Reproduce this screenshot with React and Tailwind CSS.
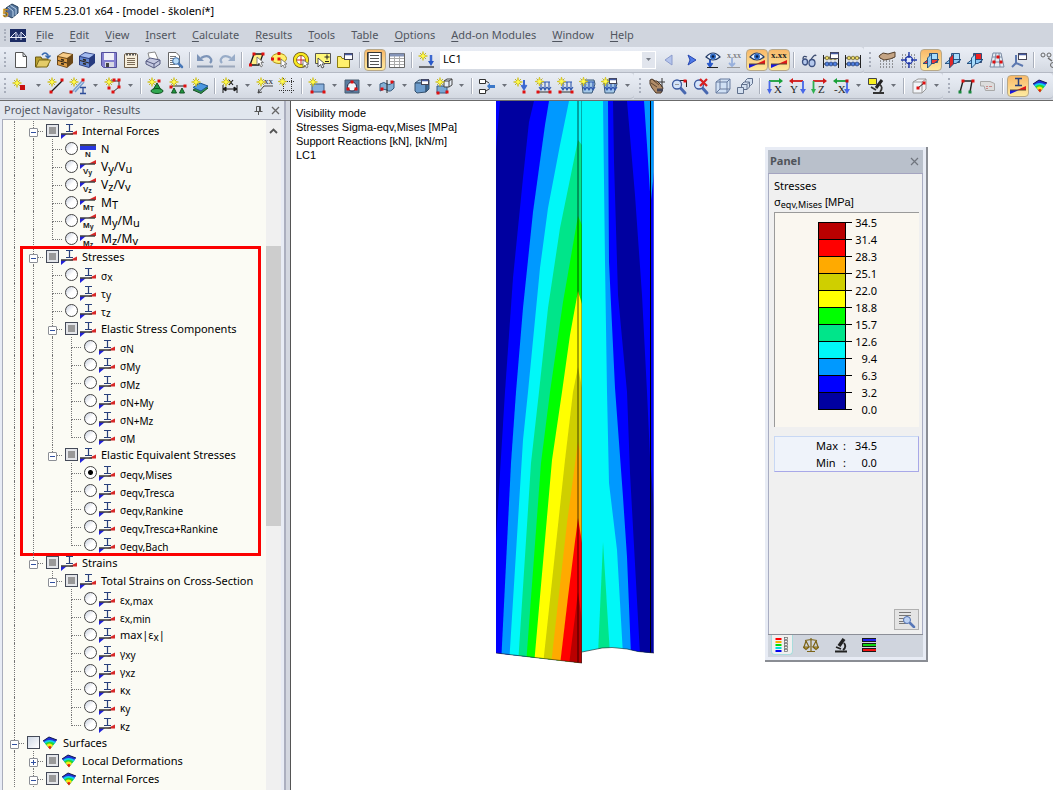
import { useState } from "react";
import clsx from "clsx";

/* ---------- shared icon parts ---------- */

const Spark = ({ x = 4, y = 4 }) => (
  <g transform={`translate(${x} ${y})`}>
    <path d="M0-4.500L1-1L4.500 0L1 1L0 4.500L-1 1L-4.500 0L-1-1Z" fill="#f4e818" stroke="#c8b818" strokeWidth="0.600" />
    <path d="M-3-3L3 3M-3 3L3-3" stroke="#b4a820" strokeWidth="0.900" />
    <circle r="1.800" fill="#fffa50" />
  </g>
);

const Dot = ({ x, y, c = "#e01010" }) => (
  <rect x={x - 1.5} y={y - 1.5} width="3" height="3" fill={c} />
);

const Lens = ({ x = 7, y = 6 }) => (
  <g transform={`translate(${x} ${y})`}>
    <path d="M3 3L8 8.500" stroke="#4868b0" strokeWidth="3" strokeLinecap="round" />
    <circle r="4.500" fill="#d4e4fa" stroke="#3c5aa0" strokeWidth="1.300" />
  </g>
);

const Cube = () => (
  <>
    <path d="M1 5L5 2H15L12 5Z" fill="#a8ccec" stroke="#34506c" />
    <path d="M1 5H12V14L3 15L1 13Z" fill="#6c9ccc" stroke="#34506c" />
    <path d="M12 5L15 2V11L12 14Z" fill="#3c6c9c" stroke="#34506c" />
  </>
);

const Cabinet = ({ light, mid, dark }) => (
  <>
    <path d="M0 4L6 0L16 2V11L10 16L0 13Z" fill={dark} />
    <path d="M1 4L6 1L15 2.500L10 6Z" fill={light} />
    <path d="M1 5L10 7V15L1 12.500Z" fill={mid} />
    <path d="M1 8.500L10 11" stroke="#2c2418" />
    <path d="M4 7.500L7 8.300M4 11.500L7 12.300" stroke="#2c2418" strokeWidth="1.600" />
  </>
);

const Loads = ({ box }) => (
  <>
    {box && <path d="M2 6L5 2H14L15 6L12 15H3Z" fill="#a4c8e8" stroke="#3a5878" />}
    <path d="M3 4H14M5 4V11M9 4V11M13 4V11M3 9L5 12L7 9M7 9L9 12L11 9M11 9L13 12L15 9" stroke="#3058b0" strokeWidth="1.100" fill="none" />
    <Spark x={3.500} y={3.500} />
    {!box && <path d="M1 14H15" stroke="#333" />}
    {!box && <Dot x={2} y={14} />}
    {!box && <Dot x={14} y={14} />}
  </>
);

const Eye = () => (
  <>
    <path d="M1 5Q8-3 15 5Q8 11 1 5Z" fill="#eef5ff" stroke="#223a66" strokeWidth="1.200" />
    <circle cx="8" cy="4.500" r="3" fill="#2f6cc8" />
    <circle cx="8" cy="4.500" r="1.300" fill="#0a1c40" />
  </>
);

const Ramp = () => (
  <>
    <path d="M0 12V16L9 12Z" fill="#1818e0" />
    <path d="M7 12H16V8Z" fill="#e01818" />
    <path d="M0 12H16" stroke="#5a4a30" />
  </>
);

const Abacus = () => (
  <>
    <path d="M0.500 3V16M15.500 3V16M1 6H15M1 12H15" stroke="#222" fill="none" />
    <g fill="#e8d868" stroke="#554a10" strokeWidth="0.600">
      <circle cx="4" cy="6" r="1.800" /><circle cx="8" cy="6" r="1.800" /><circle cx="12" cy="6" r="1.800" />
    </g>
    <g fill="#5080e0" stroke="#102860" strokeWidth="0.600">
      <circle cx="4" cy="12" r="2" /><circle cx="8" cy="12" r="2" /><circle cx="12" cy="12" r="2" />
    </g>
  </>
);

const Planes = ({ fills }) => (
  <g stroke="#1c4878" strokeWidth="0.900">
    <path d="M6.500 1.500H14.500V10.500H6.500Z" fill={fills[2]} />
    <path d="M0 11.500L5 7.500H16L11 11.500Z" fill={fills[0]} />
    <path d="M4.500 6L8.500 2V12L4.500 16Z" fill={fills[1]} />
  </g>
);

const Axes = ({ h, v, label, flip }) => (
  <>
    <path d={flip ? "M14 3H3" : "M2 3H13"} stroke={h} strokeWidth="1.800" />
    <path d={flip ? "M4 0L0 3L4 6Z" : "M12 0L16 3L12 6Z"} fill={h} />
    <path d={flip ? "M14 3V12" : "M2.500 3V12"} stroke={v} strokeWidth="1.800" />
    <path d={flip ? "M11 11L14 16L17 11Z" : "M0 11L2.500 16L5 11Z"} fill={v} />
    <text x={flip ? 1 : 7} y="15" fontSize="11" fontFamily="Liberation Serif, serif" fill="#222">{label}</text>
  </>
);

const Rainbow = () => (
  <>
    <path d="M1 6L7 2L15 5L8 14Z" fill="#2030d8" />
    <path d="M2 7Q7 3 14 7L8 14Z" fill="#10d0e8" />
    <path d="M3 8.500Q8 5 12.500 8.500L8 14Z" fill="#28d830" />
    <path d="M4.500 10Q8 7 11 10.500L8 14Z" fill="#f8e818" />
    <path d="M6 12Q8 10 9.500 12L8 14.500Z" fill="#e82010" />
    <path d="M1 6L7 2L15 5" fill="none" stroke="#101850" />
  </>
);

const Grid = () => (
  <path d="M1 3H16M1 6H16M1 9H16M1 12H16M1 15H16" stroke="#444" strokeDasharray="1 2" />
);

const MiniWindow = ({ x, y, w = 8, h = 6 }) => (
  <g transform={`translate(${x} ${y})`}>
    <rect x="0.500" y="0.500" width={w - 1} height={h - 1} fill="#fff" stroke="#445" />
    <path d={`M1 1.500H${w - 1}`} stroke="#445aa0" strokeWidth="1.500" />
  </g>
);

/* ---------- toolbar icons ---------- */

const icons = {
  doc: <path d="M2.500 0.500H10L13.500 4.500V15.500H2.500ZM10 0.500V4.500H14" fill="#fff" stroke="#555" />,
  open: (
    <>
      <path d="M0.500 15V5H6L7 7H13V14Z" fill="#b8a030" stroke="#6c5a10" />
      <path d="M1 15L4 8H15.500L12 15Z" fill="#e4cc68" stroke="#7c6a18" />
      <path d="M7 3Q10-1 13 3V5M10.500 3.500L13 6L15.500 3.500" fill="none" stroke="#3468b0" strokeWidth="1.500" />
    </>
  ),
  cabinetBrown: <Cabinet light="#f8cc88" mid="#e0a048" dark="#6c4818" />,
  cabinetBlue: <Cabinet light="#a4bcf0" mid="#6488d0" dark="#283c80" />,
  save: (
    <>
      <path d="M0.500 0.500H15.500V15.500H2.500L0.500 13.500Z" fill="#8480d0" stroke="#54509c" />
      <path d="M3 1H13V8H3Z" fill="#f0f0f8" />
      <path d="M4 10H13V15H4Z" fill="#d8d8e4" />
      <path d="M5 11H8V15H5Z" fill="#444" />
    </>
  ),
  clipboard: (
    <>
      <path d="M1.500 2.500L3 1.500H13L14.500 2.500V15.500H1.500Z" fill="#f6eedc" stroke="#6c5c48" />
      <path d="M3 2.500H13" stroke="#555" strokeWidth="2" strokeDasharray="2 1" />
      <path d="M4 6.500H12M4 8.500H12M4 10.500H12M4 12.500H12" stroke="#7c6c58" />
    </>
  ),
  printer: (
    <>
      <path d="M3 1L10 0L13 7L5 9Z" fill="#fff" stroke="#888" />
      <path d="M1 9L5 6L15 8V12L9 16L1 12Z" fill="#c4c8e0" stroke="#555a80" />
      <path d="M1 9L9 12L15 8M9 12V16" fill="none" stroke="#555a80" />
    </>
  ),
  preview: (
    <>
      <path d="M1.500 0.500H9L12.500 4V15.500H1.500Z" fill="#fff" stroke="#666" />
      <path d="M3 4.500H9M3 6.500H8M3 8.500H7M3 10.500H8M3 12.500H8" stroke="#777" />
      <g transform="translate(9 9)">
        <path d="M2 2L6 6" stroke="#4878b8" strokeWidth="2.500" strokeLinecap="round" />
        <circle r="3.300" fill="#b8dcf8" stroke="#3c6ca8" />
      </g>
    </>
  ),
  undo: (
    <>
      <path d="M4 6Q11 2 14 7Q15 9 13 11" fill="none" stroke="#7c94b8" strokeWidth="2.200" />
      <path d="M0 2V9H7Z" fill="#7c94b8" />
      <path d="M0 14.500H16" stroke="#8898b0" strokeWidth="2" />
    </>
  ),
  redo: (
    <>
      <path d="M12 6Q5 2 2 7Q1 9 3 11" fill="none" stroke="#98acc8" strokeWidth="2.200" />
      <path d="M16 2V9H9Z" fill="#98acc8" />
      <path d="M0 14.500H16" stroke="#9ca8bc" strokeWidth="2" />
    </>
  ),
  selectPoly: (
    <>
      <path d="M5 2H14L10 13H1Z" fill="#fff088" stroke="#181818" strokeWidth="1.300" />
      <path d="M8 5V13L10 11L12 15L13.500 14L12 10.500H14.500Z" fill="#fff" stroke="#666" strokeWidth="0.800" />
      <Dot x={5} y={2} /><Dot x={14} y={2} /><Dot x={1.500} y={13} />
    </>
  ),
  selectEllipse: (
    <>
      <ellipse cx="8" cy="6.500" rx="7.500" ry="5" fill="#fff06c" stroke="#b09010" />
      <path d="M10 7V15L12 13L13.500 16L15 15L13.500 12H16Z" fill="#fff" stroke="#666" strokeWidth="0.800" />
      <Dot x={1.500} y={7} /><Dot x={8} y={1.500} /><Dot x={8} y={7} />
    </>
  ),
  selectRing: (
    <>
      <circle cx="8" cy="8" r="6" fill="#fff" stroke="#604810" strokeWidth="4" />
      <circle cx="8" cy="8" r="6" fill="none" stroke="#f8e820" strokeWidth="2.600" />
      <path d="M8 4V12M4 8H12" stroke="#d02020" />
      <path d="M10 8V15L12 13L13.500 16L15 15L13.500 12H16Z" fill="#fff" stroke="#666" strokeWidth="0.800" />
    </>
  ),
  selectPlus: (
    <>
      <path d="M0.500 1.500H15.500V11.500H0.500Z" fill="#fff878" stroke="#555" />
      <path d="M12 2.500V7.500M9.500 5H14.500M10 9.500H14" stroke="#222" />
      <path d="M3 6V15L5.500 12.500L7 16L9 15L7 12H10Z" fill="#fff" stroke="#444" strokeWidth="0.900" />
    </>
  ),
  selectWindow: (
    <>
      <path d="M0.500 4.500H4L5 6.500H12.500V15.500H0.500Z" fill="#fff06c" stroke="#8c7c10" />
      <MiniWindow x={7} y={1} w={9} h={7} />
    </>
  ),
  listPane: (
    <>
      <path d="M0.500 0.500H14.500V15.500H0.500Z" fill="#fff" stroke="#333" />
      <path d="M3 3.500H12M3 6.500H12M3 9.500H12M3 12.500H12" stroke="#555" />
      <path d="M1.500 1V15M14 1V15" stroke="#777" />
    </>
  ),
  tablePane: (
    <>
      <path d="M0.500 1.500H15.500V15.500H0.500Z" fill="#fff" stroke="#666" />
      <path d="M1 3H15" stroke="#8494b8" strokeWidth="3" />
      <path d="M1 6.500H15M1 9.500H15M1 12.500H15M5.500 4V15M10.500 4V15" stroke="#aaa" />
    </>
  ),
  newLoad: (
    <>
      <Spark x={4} y={4} />
      <path d="M12 3V10" stroke="#3c68d0" strokeWidth="2.500" />
      <path d="M9 9L12 14L15 9Z" fill="#2858c8" />
      <path d="M0 15H15" stroke="#222" strokeWidth="1.200" />
    </>
  ),
  prev: <path d="M11 3V13L4 8Z" fill="#b4c4ec" stroke="#8c9ccc" />,
  next: <path d="M5 3L13 8L5 13L7 8Z" fill="#4c78e8" stroke="#2848b0" />,
  eyeLoad: (
    <>
      <path d="M5 8V13M2.500 11L5 14.500L7.500 11" stroke="#2858c8" strokeWidth="2" fill="none" />
      <Eye />
      <path d="M2 15.500H13" stroke="#222" />
    </>
  ),
  valuesOff: (
    <>
      <text x="0" y="6" fontSize="8" fontFamily="Liberation Serif, serif" fill="#555">x.xx</text>
      <path d="M5 6V13M2 11L5 14L8 11" stroke="#98b0dc" strokeWidth="1.800" fill="none" />
      <path d="M0 15.500H13" stroke="#999" />
    </>
  ),
  eyeRamp: <><Eye /><Ramp /></>,
  valuesRamp: (
    <>
      <text x="0" y="6" fontSize="9" fontWeight="bold" fontFamily="Liberation Serif, serif" fill="#222">x.xx</text>
      <Ramp />
    </>
  ),
  glasses: (
    <>
      <path d="M2 7Q2 3 6 5M9 9Q14 1 15 4" stroke="#3c4c70" strokeWidth="1.300" fill="none" />
      <ellipse cx="4" cy="10" rx="2.500" ry="3" fill="#b4c8ec" stroke="#3c5080" strokeWidth="1.300" />
      <ellipse cx="11" cy="11" rx="3" ry="3.500" fill="#b4c8ec" stroke="#3c5080" strokeWidth="1.300" />
    </>
  ),
  abacusWindow: <><Abacus /><MiniWindow x={7} y={0} w={9} h={7} /></>,
  abacus: <Abacus />,
  handGrid: (
    <>
      <Grid />
      <path d="M0 4L4 1L9 2L16 0V5L11 7L5 8L1 6Z" fill="#c4a484" stroke="#54402c" />
    </>
  ),
  snapGrid: (
    <>
      <Grid />
      <circle cx="8" cy="8" r="3.500" fill="#e4ecfc" stroke="#2038a8" strokeWidth="1.300" />
      <path d="M8 0V6M8 10V16M0 8H6M10 8H16" stroke="#2038a8" strokeWidth="1.400" />
    </>
  ),
  planeXY: <Planes fills={["#f03838", "#8cc8f4", "#a8dcfc"]} />,
  planeYZ: <Planes fills={["#8cc8f4", "#e02828", "#a8dcfc"]} />,
  planeXZ: <Planes fills={["#8cc8f4", "#a8dcfc", "#f02020"]} />,
  mesh: (
    <>
      <path d="M4 1H12L15 15H1ZM3 5H13M2 10H14M7 1L5 15M10 1L11 15" fill="#e4ecf4" stroke="#7c8ca4" />
      <Dot x={9} y={5} /><Dot x={5} y={10} /><Dot x={12} y={10} />
    </>
  ),
  axisWindow: (
    <>
      <path d="M5 3V11L1 15M5 11L12 14" stroke="#5c78b0" strokeWidth="2" fill="none" />
      <MiniWindow x={7} y={1} w={9} h={7} />
    </>
  ),
  linkNodes: (
    <>
      <circle cx="2" cy="3" r="2" fill="none" stroke="#666" />
      <circle cx="8" cy="3" r="2" fill="none" stroke="#666" />
      <path d="M7 6L11 9" stroke="#666" strokeWidth="1.500" />
      <circle cx="12" cy="13" r="2.500" fill="none" stroke="#666" />
    </>
  ),
  node: <><Spark x={4} y={5} /><rect x="7" y="7" width="5" height="5" fill="#c81010" /></>,
  line: (
    <>
      <path d="M3 14L14 3" stroke="#181818" strokeWidth="1.300" />
      <Spark x={4} y={4} /><Dot x={14} y={2} /><Dot x={3} y={14} />
    </>
  ),
  member: (
    <>
      <path d="M2 14L12 3M5 14L14 4" stroke="#78a0d0" strokeWidth="1.500" />
      <path d="M10 9.500H16M13 9.500V15M10 15.500H16" stroke="#2c4c98" strokeWidth="1.300" />
      <Spark x={4} y={4} /><Dot x={13} y={2} /><Dot x={1} y={14} />
    </>
  ),
  polyline: (
    <>
      <path d="M6 3H14V9L8 14" stroke="#333" fill="none" />
      <Spark x={4} y={4} /><Dot x={9} y={2} /><Dot x={14} y={2} /><Dot x={14} y={9} /><Dot x={8} y={14} /><Dot x={4} y={10} />
    </>
  ),
  support: (
    <>
      <path d="M9 5L13 12H5Z" fill="#209840" stroke="#105020" />
      <ellipse cx="9" cy="13" rx="6" ry="2.500" fill="#30a850" stroke="#105020" />
      <Dot x={11} y={3} /><Spark x={4} y={4} />
    </>
  ),
  supportPair: (
    <>
      <path d="M2 8H15" stroke="#222" />
      <path d="M4 10L6.500 15H1.500ZM12 10L14.500 15H9.500Z" fill="#209840" stroke="#105020" />
      <Spark x={4} y={4} /><Dot x={1} y={9} /><Dot x={15} y={8} />
    </>
  ),
  surface: (
    <>
      <path d="M1 12L8 8L16 10L9 15.500Z" fill="#2c9048" stroke="#185028" />
      <path d="M1 9.500L8 5L16 8L9 13Z" fill="#4c98e0" stroke="#205890" />
      <Spark x={4} y={4} />
    </>
  ),
  dimension: (
    <>
      <path d="M1 7V15M15 7V15M1 11H15M1 11L4 9V13ZM15 11L12 9V13Z" stroke="#181818" fill="#181818" />
      <path d="M7 2L11 7M11 2L7 7" stroke="#181818" strokeWidth="1.200" /><Spark x={4} y={4} />
    </>
  ),
  comment: (
    <>
      <path d="M1 15L7 8H16M1 15L2 11M1 15L5 14" stroke="#444" fill="none" />
      <text x="7" y="6" fontSize="9" fontFamily="Liberation Serif, serif" fill="#222">xx</text>
      <Spark x={4} y={4} />
    </>
  ),
  guideline: (
    <>
      <path d="M4.500 0V16M12.500 0V16M0 3.500H16M0 12.500H16" stroke="#333" strokeDasharray="1 1" />
      <Spark x={3.500} y={3.500} />
    </>
  ),
  rect: (
    <>
      <path d="M3 6H15V14H3Z" fill="#88b0dc" stroke="#385880" />
      <Spark x={4} y={4} /><Dot x={3} y={14} /><Dot x={15} y={14} />
    </>
  ),
  opening: (
    <>
      <path d="M1 2H15V15H1Z" fill="#587ca0" stroke="#485c70" />
      <circle cx="8" cy="8.500" r="4.500" fill="#f4f6fa" stroke="#224" />
      <Dot x={8} y={4} /><Dot x={4} y={11} /><Dot x={12} y={11} />
    </>
  ),
  shell: (
    <>
      <path d="M1 6Q5 3 8 6Q11 8 15 3V10Q11 15 8 12Q5 10 1 13Z" fill="#84b0d4" stroke="#34587c" />
      <path d="M8 2V15" stroke="#222" /><Dot x={3} y={11} /><Dot x={13} y={4} />
    </>
  ),
  solid: <><Cube /><MiniWindow x={7} y={1} w={8} h={6} /></>,
  solidNew: (
    <>
      <path d="M1 8H11V15H1Z" fill="#78a8d4" stroke="#385880" />
      <path d="M8 3L11 1H16V7L13 9H8ZM8 3H13V9M13 3L16 1" fill="#e8eef6" stroke="#444" />
      <Spark x={4} y={4} /><Dot x={11} y={14} /><Dot x={2} y={15} />
    </>
  ),
  connect: (
    <>
      <path d="M0.500 1.500H6.500V5.500H0.500ZM0.500 11.500H6.500V15.500H0.500Z" fill="#fff" stroke="#333" />
      <path d="M7 3L10 5M7 13L10 11" stroke="#333" />
      <path d="M8 8L11 5V7H16V10H11V12Z" fill="#3c78c8" />
    </>
  ),
  nodalLoad: (
    <>
      <path d="M10 2V9M7.500 7L10 11L12.500 7" stroke="#3c68d0" strokeWidth="2" fill="none" />
      <Spark x={4} y={4} /><Dot x={10} y={14} />
    </>
  ),
  memberLoad: <Loads />,
  lineLoad: <Loads />,
  surfaceLoad: <Loads box />,
  solidLoad: <><Loads box /><MiniWindow x={7} y={0} w={8} h={6} /></>,
  pan: (
    <>
      <path d="M1 2L3 1L6 3L8 3L12 7L14 10L12 15L7 15L3 10L1 6Z" fill="#b08c68" stroke="#483424" />
      <path d="M2 5L8 9M4 2L10 7" stroke="#5c4430" />
      <path d="M13 0V9M9 4H16" stroke="#333" />
      <path d="M8 12H14" stroke="#445" strokeWidth="3" />
    </>
  ),
  zoomWindow: (
    <>
      <path d="M7 2.500H15.500V9" stroke="#222" fill="none" />
      <Lens x={6} y={6.500} />
      <path d="M4 6.500H8" stroke="#999" /><Dot x={14} y={3} />
    </>
  ),
  zoomCancel: (
    <>
      <Lens x={6} y={6.500} />
      <path d="M7 1L14 8M14 1L7 8" stroke="#d82020" strokeWidth="2.200" />
    </>
  ),
  box3d: (
    <path d="M1 4L5 1H15V11L12 15H1ZM1 4H12V15M12 4L15 1M5 1V11H15M5 11L1 15" fill="#d0e0f4" stroke="#687ca0" />
  ),
  boxes: (
    <g fill="#d4e0f0" stroke="#60708c">
      <path d="M8.500 2.500L10.500 0.500H15.500V5.500L13.500 7.500H8.500Z" />
      <path d="M4.500 6.500L7 4H12.500V9L10 11.500H4.500ZM4.500 6.500H10V11.500M10 6.500L12.500 4" />
      <path d="M0.500 9.500H6.500V15.500H0.500Z" />
    </g>
  ),
  viewX: <Axes h="#18a038" v="#4868e8" label="X" />,
  viewY: <Axes h="#d01818" v="#4868e8" label="Y" flip />,
  viewZ: <Axes h="#d01818" v="#30b050" label="Z" />,
  viewMinusX: (
    <>
      <Axes h="#18a038" v="#4868e8" label="-X" flip />
      <Dot x={14} y={3} c="#c01010" />
    </>
  ),
  scope: (
    <>
      <path d="M0.500 0.500H8.500V6.500H0.500Z" fill="#f8f020" stroke="#444" />
      <path d="M14 2L8 10" stroke="#222" strokeWidth="3" />
      <path d="M11 6Q16 9 12 14M3 9L8 12M5 15H16" stroke="#333" strokeWidth="1.800" fill="none" />
    </>
  ),
  section: (
    <>
      <path d="M2 4L7 1H15V11L11 15H2ZM2 4H11V15M11 4L15 1" fill="#f2f4f8" stroke="#999" />
      <path d="M7 10L13 5" stroke="#222" /><Dot x={7} y={10} /><Dot x={13} y={5} />
    </>
  ),
  frame: (
    <>
      <path d="M2 14L5 3H14L12 14" stroke="#222" strokeWidth="1.400" fill="none" />
      <Dot x={5} y={3} /><Dot x={15} y={3} />
      <Dot x={2} y={14} c="#18883c" /><Dot x={12} y={14} c="#18883c" />
    </>
  ),
  render: (
    <>
      <path d="M0.500 3.500H10L14.500 5.500V12.500H5.500L4 8H0.500Z" fill="#dcdcdc" stroke="#a8a8a8" />
      <path d="M6 8.500H8M9 8.500H12M6 10.500H8" stroke="#c88" />
    </>
  ),
  stressMember: (
    <>
      <path d="M5 0.500H12M8.500 0.500V7M5 7.500H12" stroke="#28407c" strokeWidth="1.500" />
      <Ramp />
    </>
  ),
  rainbow: <Rainbow />,
};

/* "|" separator, "v" drop-down arrow, "*" prefix marks a pressed button */
const topLeft = "doc open cabinetBrown cabinetBlue save clipboard printer preview | undo redo | selectPoly selectEllipse selectRing selectPlus selectWindow | *listPane tablePane | newLoad";
const topMid = "prev next eyeLoad valuesOff *eyeRamp *valuesRamp | glasses abacusWindow abacus";
const topRight = "handGrid snapGrid *planeXY planeYZ planeXZ mesh axisWindow | linkNodes";
const lowLeft = "node v line member v polyline v | support supportPair surface | dimension v comment guideline | rect v opening v shell v solid solidNew v | connect v nodalLoad memberLoad lineLoad surfaceLoad solidLoad v";
const lowMid = "pan zoomWindow zoomCancel box3d boxes | viewX viewY viewZ viewMinusX v scope v | section v";
const lowRight = "frame render | *stressMember rainbow";

function Tools({ items }) {
  return items.split(" ").map((item, i) => {
    if (item === "|") {
      return <span key={i} className="mx-[3px] h-4 w-[2px] shrink-0 border-l border-[#a9afbb] bg-white" />;
    }
    if (item === "v") {
      return (
        <button key={i} type="button" aria-label="More" className="flex h-6 w-[13px] shrink-0 items-center justify-center">
          <svg width="5" height="3" viewBox="0 0 5 3"><path d="M0 0H5L2.500 3Z" fill="#6c717a" /></svg>
        </button>
      );
    }
    const pressed = item[0] === "*";
    const name = pressed ? item.slice(1) : item;
    return (
      <button
        key={i}
        type="button"
        aria-label={name}
        className={clsx(
          "flex h-[22px] w-[22px] shrink-0 items-center justify-center",
          pressed && "rounded-sm border border-[#b8a888] bg-gradient-to-b from-[#f8b868] to-[#fdeaa0]",
        )}
      >
        <svg width="16" height="16" viewBox="0 0 16 16" fill="none" className="shrink-0 overflow-visible">{icons[name]}</svg>
      </button>
    );
  });
}

function ToolGroup({ children, first, grow }) {
  return (
    <div
      className={clsx(
        "flex h-[26px] shrink-0 items-center rounded-r-sm border-b border-[#b4b9c4] bg-gradient-to-b from-[#eaeef6] via-[#e0e5ed] to-[#d3d8e1]",
        grow && "grow",
      )}
    >
      <span className={clsx("flex shrink-0 justify-center", first ? "w-[10px]" : "w-3")}>
        <span className="h-[15px] border-l-2 border-dotted border-[#a8aebb]" />
      </span>
      {children}
    </div>
  );
}

/* ---------- navigator tree ---------- */

const radio = (label, icon = "beam") => ({ label, icon, radio: true });

const tree = [
  {
    label: "Members",
    hidden: true,
    children: [
      {
        label: "Internal Forces",
        children: [
          radio("N", "N"),
          radio("V_y/V_u", "Vy"),
          radio("V_z/V_v", "Vz"),
          radio("M_T", "MT"),
          radio("M_y/M_u", "My"),
          radio("M_z/M_v", "Mz"),
        ],
      },
      {
        label: "Stresses",
        marked: true,
        children: [
          radio("σ_x"),
          radio("τ_y"),
          radio("τ_z"),
          {
            label: "Elastic Stress Components",
            children: [
              radio("σ_N"),
              radio("σ_My"),
              radio("σ_Mz"),
              radio("σ_N+My"),
              radio("σ_N+Mz"),
              radio("σ_M"),
            ],
          },
          {
            label: "Elastic Equivalent Stresses",
            children: [
              radio("σ_eqv,Mises"),
              radio("σ_eqv,Tresca"),
              radio("σ_eqv,Rankine"),
              radio("σ_eqv,Tresca+Rankine"),
              radio("σ_eqv,Bach"),
            ],
          },
        ],
      },
      {
        label: "Strains",
        children: [
          {
            label: "Total Strains on Cross-Section",
            children: [
              radio("ε_x,max"),
              radio("ε_x,min"),
              radio("max|ε_x|"),
              radio("γ_xy"),
              radio("γ_xz"),
              radio("κ_x"),
              radio("κ_y"),
              radio("κ_z"),
            ],
          },
        ],
      },
    ],
  },
  {
    label: "Surfaces",
    icon: "rainbow",
    empty: true,
    more: true,
    children: [
      { label: "Local Deformations", icon: "rainbow", closed: true },
      { label: "Internal Forces", icon: "rainbow", more: true, children: [] },
    ],
  },
];

function TreeIcon({ name }) {
  if (name === "rainbow") {
    return <svg width="16" height="16" viewBox="0 0 16 16" className="shrink-0"><Rainbow /></svg>;
  }
  return (
    <svg width="16" height="16" viewBox="0 0 16 16" className="shrink-0 overflow-visible">
      {name === "N" && (
        <>
          <path d="M0 3H16V5H0Z" fill="#44484f" />
          <path d="M0 5H16V9H0Z" fill="#2838e0" />
          <text x="5" y="16" fontSize="8" fontWeight="bold" fontFamily="Liberation Sans, sans-serif" fill="#222">N</text>
        </>
      )}
      {name === "beam" && (
        <>
          <path d="M5 1.500H12M8.500 2V8M5 8.500H12" stroke="#28407c" strokeWidth="1.200" />
          <path d="M8 11.500H16V7.500Z" fill="#d82828" />
          <path d="M0 11V16L6 11Z" fill="#2020d8" />
          <path d="M0 11H12" stroke="#444" strokeWidth="1.600" />
        </>
      )}
      {name !== "N" && name !== "beam" && (
        <>
          <path d="M8 5H16V1Z" fill="#d82828" />
          <path d="M0 5V10L6 5Z" fill="#2020d8" />
          <path d="M0 5H15" stroke="#444" strokeWidth="1.500" />
          <text x="3" y="15" fontSize="8" fontWeight="bold" fontFamily="Liberation Sans, sans-serif" fill="#222">
            {name[0]}<tspan fontSize="7" dy="1">{name[1]}</tspan>
          </text>
        </>
      )}
    </svg>
  );
}

/* "_" starts a subscript; Greek symbols are set smaller and lower */
function Label({ text }) {
  const greek = /^[^A-Za-z]_/.test(text);
  return (
    <span className={clsx(greek && "pt-[2px] text-[10px]", !greek && text.includes("_") && !text.includes("ε") && "text-[12px]")}>
      {text.split(/(_[^/|]+)/).map((part, i) =>
        part[0] === "_" ? (
          <span key={i} className={clsx("relative", greek ? "top-px" : "top-[2px]", text.includes("ε") ? "text-[10px]" : !greek && "text-[11px]")}>
            {part.slice(1)}
          </span>
        ) : (
          <span key={i}>{part}</span>
        ),
      )}
    </span>
  );
}

function Row({ node, trail, last, path, picked, onPick }) {
  const expandable = !node.radio;
  return (
    <div className="flex h-[18px] items-center pl-[2px]">
      {trail.map((on, i) => (
        <span key={i} className="flex h-full w-[19px] shrink-0 pl-[9px]">
          {on && <span className="h-full border-l border-dotted border-[#777]" />}
        </span>
      ))}
      <span className="relative flex h-full w-[19px] shrink-0 flex-col pl-[9px]">
        <span className="h-[11px] w-[10px] border-b border-l border-dotted border-[#777]" />
        {!last && <span className="h-[7px] border-l border-dotted border-[#777]" />}
        {expandable && (
          <button
            type="button"
            aria-label={node.closed ? "Expand" : "Collapse"}
            className="absolute left-[5px] top-[7px] flex h-[9px] w-[9px] items-center justify-center rounded-[1px] border border-[#8c8f96] bg-white"
          >
            <svg width="5" height="5" viewBox="0 0 5 5">
              <path d={node.closed ? "M0 2.500H5M2.500 0V5" : "M0 2.500H5"} stroke="#3050a0" />
            </svg>
          </button>
        )}
      </span>
      <label className="flex items-center whitespace-nowrap leading-[18px]">
        {node.radio ? (
          <input
            type="radio"
            name="result"
            checked={picked === path}
            onChange={() => onPick(path)}
            className="mx-[3px] size-[13px] shrink-0 appearance-none rounded-full border border-[#444] bg-gradient-to-br from-[#c4ccdc] via-white to-white checked:bg-[radial-gradient(circle,#000_0_2px,#fff_3px)]"
          />
        ) : (
          <input
            type="checkbox"
            defaultChecked={!node.empty}
            className="mx-[3px] size-[13px] shrink-0 appearance-none border border-[#444a58] bg-gradient-to-br from-[#cfd8e6] to-white checked:bg-[#999] checked:bg-none checked:shadow-[inset_0_0_0_2px_#e4e6ea]"
          />
        )}
        <span className="-ml-px flex items-center gap-[5px] pt-[2px]">
          <TreeIcon name={node.icon || "beam"} />
          <Label text={node.label} />
        </span>
      </label>
    </div>
  );
}

function Branch({ nodes, trail, prefix, picked, onPick }) {
  return (
    <ul>
      {nodes.map((node, i) => {
        const last = i === nodes.length - 1 && !node.more;
        const path = `${prefix}/${node.label}`;
        return (
          <li key={path} className="relative">
            {!node.hidden && (
              <Row node={node} trail={trail} last={last} path={path} picked={picked} onPick={onPick} />
            )}
            {node.children && (
              <Branch nodes={node.children} trail={[...trail, !last]} prefix={path} picked={picked} onPick={onPick} />
            )}
            {node.marked && (
              <span className="pointer-events-none absolute -top-px right-[5px] -bottom-[3px] left-[17px] border-[3px] border-[#fb0000]" />
            )}
          </li>
        );
      })}
    </ul>
  );
}

function Navigator() {
  const [picked, setPicked] = useState("/Members/Stresses/Elastic Equivalent Stresses/σ_eqv,Mises");

  return (
    <aside className="flex w-[291px] shrink-0 border-r border-[#555] bg-[#d3d7e0] pr-1">
      <div className="flex min-w-0 grow flex-col border-r-2 border-[#abafbf] bg-[#e8ecf5]">
        <header className="flex h-[18px] shrink-0 items-center bg-[#e1e6ee] pl-1 text-[#50555e]">
          <h2 className="grow">Project Navigator - Results</h2>
          <button type="button" aria-label="Pin" className="w-[17px]">
            <svg width="9" height="9" viewBox="0 0 9 9" fill="none" stroke="#555"><path d="M2.500 0.500H6.500V5.500M2.500 0.500V5.500M0.500 5.500H8.500M4.500 6V9M5.500 1V5" /></svg>
          </button>
          <button type="button" aria-label="Close" className="w-[13px]">
            <svg width="9" height="9" viewBox="0 0 9 9" stroke="#666" strokeWidth="1.300"><path d="M1 1L8 8M8 1L1 8" /></svg>
          </button>
        </header>
        <div className="mr-[3px] ml-[2px] flex min-h-0 grow border-t border-l border-[#a9adbb]">
          <div className="min-w-0 grow overflow-hidden bg-[#fbfbf4] pt-px text-black">
            <Branch nodes={tree} trail={[]} prefix="" picked={picked} onPick={setPicked} />
          </div>
          <div className="flex w-[15px] shrink-0 flex-col items-center bg-[#f0f0f0]">
            <svg width="9" height="6" viewBox="0 0 9 6" className="mt-2 shrink-0"><path d="M1 5L4.500 1.500L8 5" fill="none" stroke="#555" strokeWidth="1.800" /></svg>
            <span className="mt-[112px] h-[280px] w-full bg-[#cdcdcd]" />
          </div>
        </div>
      </div>
    </aside>
  );
}

/* ---------- stress plot ---------- */

function Model() {
  return (
    <svg viewBox="496 101 160 564" width="160" height="564" className="absolute top-0 left-[205px]" aria-label="Stress plot">
      <clipPath id="plateLeft"><path d="M496 101H582V663L496 653Z" /></clipPath>
      <clipPath id="plateRight"><path d="M582 101H654V653L648 652.500L638 651.500L627 649L612 647.500L602 648L582 652Z" /></clipPath>
      <g clipPath="url(#plateLeft)">
        <path d="M496 101H582V665H496Z" fill="#0000a0" />
        <path d="M496 101H500L496 150Z" fill="#0000ff" />
        <path d="M534 101L529 122L523 178L513 278L505 392L501 457L496 540V665H582V101Z" fill="#0000ff" />
        <path d="M549 101L545 125L533 212L523 308L516 392L511 463L501 665H582V101Z" fill="#0099ff" />
        <path d="M569 101L560 145L548 208L540 268L528 392L523 440L509 665H582V101Z" fill="#00f8f8" />
        <path d="M578 140L560 228L548 308L539 392L531 463L518 665H582V145Z" fill="#00e58a" />
        <path d="M578 216L563 302L550 392L541 463L526 665H582V225Z" fill="#00ff00" />
        <path d="M578 291L570 335L562 392L552 460L534 665H582V304Z" fill="#ffff00" />
        <path d="M578 367L573 392L565 460L543 665H582V388Z" fill="#cfcf00" />
        <path d="M578 442L567 523L551 665H582V460Z" fill="#ffaa00" />
        <path d="M578 518L568 597L560 665H582V543Z" fill="#ff0000" />
        <path d="M578 592L569 665H582V620Z" fill="#b90000" />
        <path d="M578 101V663" stroke="#000" strokeOpacity="0.350" strokeWidth="2" />
      </g>
      <g clipPath="url(#plateRight)">
        <path d="M582 101H655V660H582Z" fill="#00f8f8" />
        <path d="M603 101L605 262L607 392L609 483L617 550L623 655H655V101Z" fill="#0099ff" />
        <path d="M608 101L609 262L615 388L623 497L627 557L631 655H655V101Z" fill="#0000ff" />
        <path d="M613 101L614 162L618 295L627 392L630 473L640 655H655V520L650 457L647 392L642 295L635 195L627 101Z" fill="#0000a0" />
        <path d="M644 101L647 145L650 192L651 200L654 172V101Z" fill="#0099ff" />
        <path d="M603 542L598 655H610Z" fill="#00e58a" />
        <path d="M650.500 101V655" stroke="#000" />
        <path d="M653.500 101V655" stroke="#8090c8" strokeOpacity="0.500" />
      </g>
      <path d="M581.500 101V663" stroke="#003c3c" strokeOpacity="0.400" />
      <path d="M496 653L582 663M582 652L602 648L612 647.500L627 649L638 651.500L654 653" fill="none" stroke="#222" strokeOpacity="0.600" />
    </svg>
  );
}

const scale = [
  ["34.5", "bg-[#b90000]"],
  ["31.4", "bg-[#ff0000]"],
  ["28.3", "bg-[#ffaa00]"],
  ["25.1", "bg-[#cfcf00]"],
  ["22.0", "bg-[#ffff00]"],
  ["18.8", "bg-[#00ff00]"],
  ["15.7", "bg-[#00e58a]"],
  ["12.6", "bg-[#00f8f8]"],
  ["9.4", "bg-[#0099ff]"],
  ["6.3", "bg-[#0000ff]"],
  ["3.2", "bg-[#0000a0]"],
  ["0.0", null],
];

function Panel() {
  return (
    <section className="absolute top-[46px] left-[474px] flex h-[513px] w-[161px] flex-col border-[3px] border-[#e8ecf5] bg-[#f0f0f0] font-['Noto_Sans','Open_Sans',sans-serif] shadow-[1px_1px_0_1px_#8a8d94]">
      <header className="flex h-6 shrink-0 items-center justify-between border-b border-[#a4a4c0] bg-[#b9c0cb] pr-1 pl-[2px] font-bold text-[#50545a]">
        <h2>Panel</h2>
        <button type="button" aria-label="Close panel">
          <svg width="9" height="9" viewBox="0 0 9 9" stroke="#70757e" strokeWidth="1.200"><path d="M1 1L8 8M8 1L1 8" /></svg>
        </button>
      </header>
      <div className="flex grow flex-col border-x border-[#a9adc2] pt-1 pr-[3px] pl-[5px] text-black">
        <p className="leading-4">Stresses</p>
        <p className="leading-4">σ<span className="relative top-[2px] text-[9px]">eqv,Mises</span> <span className="font-['Liberation_Sans',sans-serif]">[MPa]</span></p>
        <div className="mt-px h-[215px] border-t border-l border-[#9a9a9a] bg-[#faf7f0] pt-px pl-[43px]">
          {scale.map(([value, color]) => (
            <div key={value} className="flex h-[17px]">
              <span className={clsx("mt-2 w-7 shrink-0", color && "h-[18px] border border-black", color)} />
              <span className="mt-2 h-px w-[6px] shrink-0 bg-black" />
              <span className="w-[25px] text-right leading-[17px]">{value}</span>
            </div>
          ))}
        </div>
        <dl className="mt-[9px] grid grid-cols-[auto_auto_auto] justify-start gap-x-[5px] border border-t-[#c8d8f4] border-r-[#a8a8e8] border-b-[#a8a8e8] border-l-[#c8d8f4] bg-[#eff3fa] pl-[41px] leading-[17px]">
          <dt>Max</dt><dd>:</dd><dd className="w-[26px] text-right">34.5</dd>
          <dt>Min</dt><dd>:</dd><dd className="w-[26px] text-right">0.0</dd>
        </dl>
        <button type="button" aria-label="Details" className="mt-auto mb-1 flex h-[21px] w-[25px] items-center justify-center self-end border border-[#b0b0b0] bg-[#e4e4e4]">
          <svg width="18" height="16" viewBox="0 0 18 16"><path d="M1 0.500H13M1 3.500H13M1 6.500H7M1 9.500H7M1 11.500H8" stroke="#777" /><g transform="translate(9 8)"><path d="M3 3L7 7" stroke="#5878b8" strokeWidth="2.500" strokeLinecap="round" /><circle r="3.500" fill="#bcd2f4" stroke="#5070b0" /></g></svg>
        </button>
      </div>
      <footer className="flex h-[23px] shrink-0 gap-[7px] border-t border-[#8c8f98] bg-[#d0d5de] pl-[3px]">
        <button type="button" aria-label="Color scale" className="flex h-5 w-[22px] items-center justify-center rounded-b border-x border-b border-[#a8dcdc] bg-[#f0f0f0]">
          <svg width="14" height="16" viewBox="0 0 14 16">
            {["#f00", "#fa0", "#0d0", "#0dd", "#00e"].map((c, i) => (
              <g key={c}>
                <rect x="0.500" y={i * 3 + 1} width="6" height="2" fill={c} />
                <rect x="9.500" y={i * 3 + 0.500} width="3" height="2" fill="#eee" stroke="#666" strokeWidth="0.700" />
              </g>
            ))}
          </svg>
        </button>
        <button type="button" aria-label="Factors" className="flex h-5 w-[22px] items-center justify-center">
          <svg width="16" height="15" viewBox="0 0 16 15" fill="none" stroke="#7c6418" strokeWidth="1.200"><path d="M8 0V13M2 2.500L8 1.500L14 2.500M3 3L1 9M3 3L6 9M13 3L10 9M13 3L15 9M4 13.500H12" /><path d="M0 9H6L3 11.500ZM10 9H16L13 11.500Z" fill="#d8b850" /></svg>
        </button>
        <button type="button" aria-label="Filter" className="flex h-5 w-[22px] items-center justify-center">
          <svg width="15" height="15" viewBox="0 0 15 15" fill="none" stroke="#222"><path d="M11 1L6 8" strokeWidth="3.500" /><path d="M11 5Q14 9 10 12M3 9L8 11" strokeWidth="1.800" /><path d="M2 13.500H14" strokeWidth="2" /></svg>
        </button>
        <button type="button" aria-label="Members" className="flex h-5 w-[22px] items-center justify-center">
          <svg width="14" height="14" viewBox="0 0 14 14">
            <path d="M0 0H14V4H0ZM0 5H14V9H0ZM0 10H14V14H0Z" fill="#181818" />
            <path d="M1 1H14V3H1Z" fill="#2020f0" /><path d="M1 6H14V8H1Z" fill="#10d810" /><path d="M1 11H14V13H1Z" fill="#f01010" />
          </svg>
        </button>
      </footer>
    </section>
  );
}

/* [text, index of the underlined letter] */
const menus = [
  ["File", 0],
  ["Edit", 0],
  ["View", 0],
  ["Insert", 0],
  ["Calculate", 0],
  ["Results", 0],
  ["Tools", 0],
  ["Table", 2],
  ["Options", 0],
  ["Add-on Modules", 0],
  ["Window", 0],
  ["Help", 0],
];

export default function App() {
  return (
    <div className="flex h-screen flex-col overflow-hidden bg-white font-['Noto_Sans','Open_Sans',sans-serif] text-[11px]">
      <header className="flex h-[23px] shrink-0 items-center gap-1 bg-white pl-[2px] text-black">
        <svg width="17" height="17" viewBox="0 0 17 17" className="overflow-visible">
          <path d="M4 5L10 1L16 4V10L10 15L4 12Z" fill="#54749c" stroke="#24405c" />
          <path d="M6 4L11 8V14M8.500 2.500L14 6V12" stroke="#b8d0e8" fill="none" />
          <text x="1" y="14" fontSize="10" fontWeight="bold" fontFamily="Liberation Sans, sans-serif" fill="#f0b830" stroke="#5c3c08" strokeWidth="0.400">5</text>
        </svg>
        <h1>RFEM 5.23.01 x64 - [model - školení*]</h1>
      </header>

      <nav className="flex h-6 shrink-0 items-center bg-[#d0d5de] pl-1 text-[#50555f]">
        <span className="mr-1 h-3 border-l-2 border-dotted border-[#a8aebb]" />
        <svg width="16" height="13" viewBox="0 0 16 13" className="mr-[10px]">
          <path d="M0 0H16V13H0Z" fill="#1c2c64" />
          <path d="M0 8.500H16M1 8L6 3V11M11 3V11M11 3L16 8" stroke="#e8ecf8" fill="none" />
          <path d="M6 3L9 8M11 4L8 8" stroke="#8c98c0" fill="none" />
        </svg>
        <div className="flex gap-4">
          {menus.map(([text, at]) => (
            <button key={text} type="button" className="whitespace-nowrap">
              {text.slice(0, at)}<span className="underline underline-offset-2">{text[at]}</span>{text.slice(at + 1)}
            </button>
          ))}
        </div>
      </nav>

      <div className="flex shrink-0 overflow-hidden bg-[#d0d5de]">
        <ToolGroup first>
          <Tools items={topLeft} />
          <span className="relative mx-[2px] flex">
            <select aria-label="Load case" className="h-[18px] w-[216px] appearance-none bg-white pl-[3px] text-black">
              <option>LC1</option>
            </select>
            <span className="pointer-events-none absolute inset-y-0 right-0 my-px mr-px flex w-[13px] items-center justify-center bg-[#e1e5ed]">
              <svg width="5" height="3" viewBox="0 0 5 3"><path d="M0 0H5L2.500 3Z" fill="#777c86" /></svg>
            </span>
          </span>
          <Tools items={topMid} />
        </ToolGroup>
        <ToolGroup grow><Tools items={topRight} /></ToolGroup>
      </div>
      <div className="flex shrink-0 overflow-hidden border-b border-[#6b6b6b] bg-[#d0d5de] pb-px">
        <ToolGroup first><Tools items={lowLeft} /></ToolGroup>
        <ToolGroup><Tools items={lowMid} /></ToolGroup>
        <ToolGroup grow><Tools items={lowRight} /></ToolGroup>
      </div>

      <div className="flex min-h-0 grow">
        <Navigator />
        <main className="relative min-w-0 grow overflow-hidden bg-white pt-[5px] pl-[5px] text-black">
          <div className="font-['Liberation_Sans',sans-serif] leading-[14px]">
            <p>Visibility mode</p>
            <p>Stresses Sigma-eqv,Mises [MPa]</p>
            <p>Support Reactions [kN], [kN/m]</p>
            <p>LC1</p>
          </div>
          <Model />
          <Panel />
        </main>
      </div>
    </div>
  );
}
